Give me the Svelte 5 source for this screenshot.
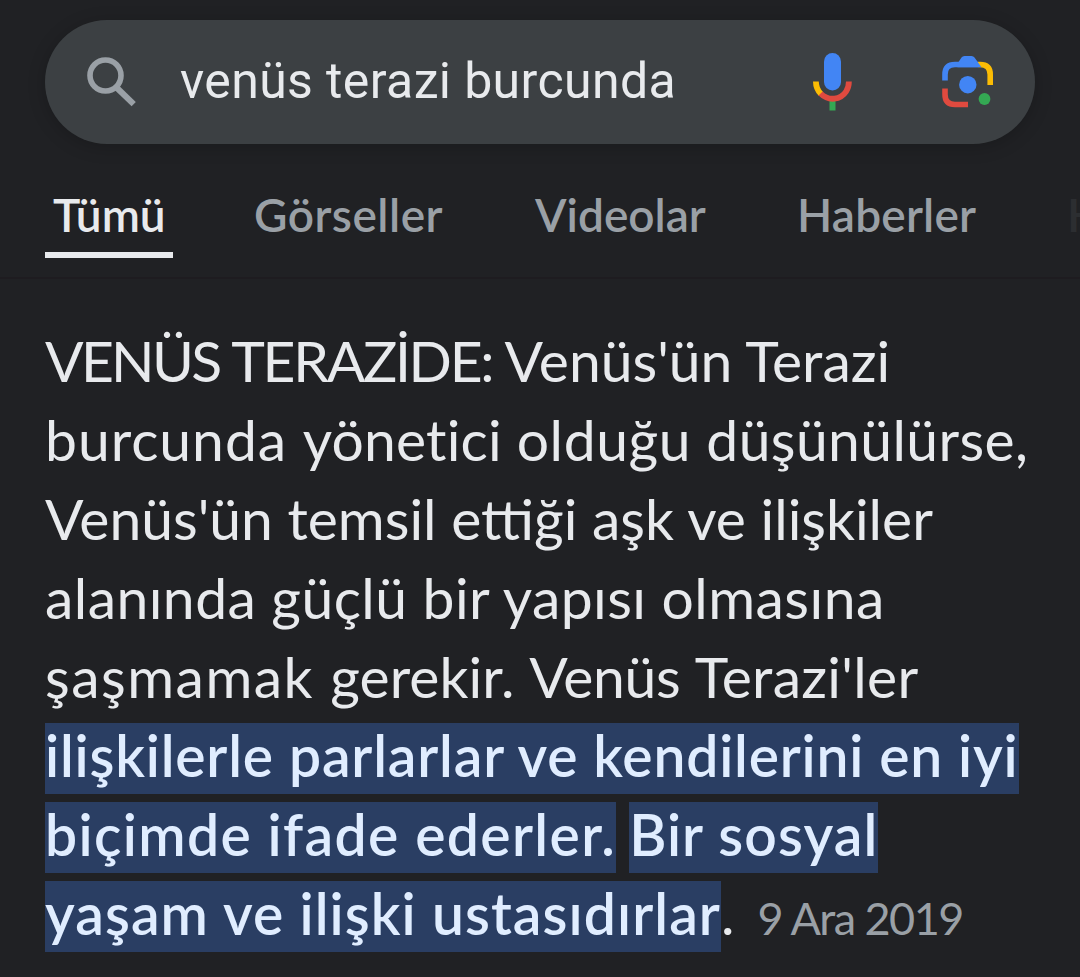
<script lang="ts">
	const tabs = [
		{ label: "Tümü", name: "all" },
		{ label: "Görseller", name: "images" },
		{ label: "Videolar", name: "videos" },
		{ label: "Haberler", name: "news" },
		{ label: "Haritalar", name: "maps" },
	];
	let active = $state("all");

	// letter spacing in px keeps every line at its measured width
	const lines = [
		[
			{ text: "VENÜS ", spacing: -2.7 },
			{ text: "TERAZİDE: ", spacing: -2.3 },
			{ text: "Venüs'ün Terazi", spacing: 0 },
		],
		[
			{ text: "burcunda ", spacing: 0.97 },
			{ text: "yönetici ", spacing: 0.2 },
			{ text: "olduğu ", spacing: 0.6 },
			{ text: "düşünülürse,", spacing: 0.4 },
		],
		[{ text: "Venüs'ün temsil ettiği aşk ve ilişkiler", spacing: 0 }],
		[{ text: "alanında güçlü bir yapısı olmasına", spacing: 0.45 }],
		[
			{ text: "şaşmamak ", spacing: 1.5 },
			{ text: "gerekir. ", spacing: 0.1 },
			{ text: "Venüs ", spacing: -0.3 },
			{ text: "Terazi'ler", spacing: 0.3 },
		],
		[{ text: "ilişkilerle parlarlar ve kendilerini en iyi", spacing: 0.81, mark: true }],
		[
			{ text: "biçimde ifade ederler.", spacing: 1.36, mark: true },
			{ text: "Bir sosyal", spacing: 1.1, mark: true },
		],
		[
			{ text: "yaşam ve ilişki ustasıdırlar", spacing: 1.07, mark: true },
			{ text: ".", spacing: 0 },
			{ text: "9 Ara 2019", spacing: -1.55, date: true },
		],
	];
</script>

<div class="page">
	<header>
		<div class="search">
			<svg class="search__icon" viewBox="0 0 50 50">
				<circle cx="18.5" cy="18.5" r="15.5" fill="none" stroke="#9aa0a6" stroke-width="5.6" />
				<path d="M30 31 L46.7 47.2" fill="none" stroke="#9aa0a6" stroke-width="6" />
			</svg>
			<span class="search__query">venüs terazi burcunda</span>
			<svg class="search__mic" viewBox="0 0 40 58">
				<rect x="11" y="0" width="17" height="37.5" rx="8.5" fill="#4285f4" />
				<path d="M16.5 47h6v10.5h-6z" fill="#34a853" />
				<path d="M2.9 28.5C2.9 34 5 38 8 41" fill="none" stroke="#fbbc04" stroke-width="5.8" />
				<path d="M7.6 40.5C15.6 48.5 27.6 47 33.1 38.5Q35.9 34 35.9 28.5" fill="none" stroke="#e04a3f" stroke-width="5.8" />
			</svg>
			<svg class="search__lens" viewBox="0 0 52 52">
				<path d="M36 8.5H38Q48.2 8.5 48.2 18.5V29" fill="none" stroke="#fbbc04" stroke-width="5.6" />
				<path d="M3 24.5V18.5Q3 8.5 13 8.5H36" fill="none" stroke="#4285f4" stroke-width="5.6" />
				<path d="M15.5 7.5L19.5 1.5Q20.5 0 22.5 0H29.5Q31.5 0 32.5 1.5L39.5 11.3H15.5Z" fill="#4285f4" />
				<path d="M3 32.5V38.5Q3 48.5 13 48.5H26" fill="none" stroke="#e04a3f" stroke-width="5.6" />
				<circle cx="25.8" cy="28.7" r="8.7" fill="#4285f4" />
				<circle cx="42.5" cy="43" r="5.9" fill="#34a853" />
			</svg>
		</div>
		<nav>
			{#each tabs as tab}
				<button class="tab tab--{tab.name}" class:active={active === tab.name} onclick={() => (active = tab.name)}>
					{tab.label}
				</button>
			{/each}
		</nav>
	</header>

	<main>
		{#each lines as line}
			<p>
				{#each line as part}
					<span class:mark={part.mark} class:date={part.date} style:letter-spacing="{part.spacing}px">{part.text}</span>
				{/each}
			</p>
		{/each}
	</main>
</div>

<style>
	:global(body) {
		margin: 0;
		background: #202124;
	}

	.page {
		width: 1080px;
		height: 977px;
		overflow: hidden;
		background: #202124;
		color: #e8eaed;
		font-family: Lato, sans-serif;
	}

	header {
		box-sizing: border-box;
		height: 279px;
		padding: 20px 45px 0;
		border-bottom: 2px solid #1e1c20;
	}

	.search {
		display: flex;
		align-items: center;
		box-sizing: border-box;
		width: 990px;
		height: 124px;
		padding-left: 42px;
		border-radius: 62px;
		background: #3c4043;
		box-shadow: 0 3px 18px rgba(0, 0, 0, 0.2);
	}

	.search__icon {
		width: 50px;
		height: 50px;
	}

	.search__query {
		width: 633px;
		margin-left: 43px;
		padding-bottom: 2px;
		font-family: Roboto, sans-serif;
		font-size: 50px;
		letter-spacing: 0.38px;
		white-space: nowrap;
	}

	.search__mic {
		width: 40px;
		height: 58px;
	}

	.search__lens {
		width: 52px;
		height: 52px;
		margin-left: 89px;
	}

	nav {
		display: flex;
		width: 1035px;
		margin-top: 34px;
		overflow: hidden;
	}

	.tab {
		box-sizing: border-box;
		flex: none;
		height: 80px;
		padding: 1px 0 2px;
		border: 0;
		border-bottom: 6px solid transparent;
		background: none;
		color: #9aa0a6;
		font: 600 46px/71px Lato, sans-serif;
		text-align: left;
		white-space: nowrap;
	}

	.tab--all {
		width: 128px;
		padding-left: 8px;
	}

	.tab--images {
		width: 190px;
		margin-left: 81px;
		letter-spacing: 0.5px;
	}

	.tab--videos {
		width: 172px;
		margin-left: 91px;
	}

	.tab--news {
		width: 182px;
		margin-left: 90px;
		letter-spacing: 0.2px;
	}

	.tab--maps {
		margin-left: 88px;
		opacity: 0.1;
	}

	.tab.active {
		border-color: #e8eaed;
		color: #e8eaed;
	}

	main {
		padding: 42px 0 0 45px;
	}

	p {
		height: 79px;
		margin: 0;
		font-size: 57px;
		line-height: 79px;
		white-space: nowrap;
	}

	.mark {
		display: inline-block;
		padding-bottom: 6px;
		background: #2a3e63;
		color: #e0edff;
		font-weight: 600;
		line-height: 65px;
	}

	.mark + .mark {
		margin-left: 13px;
	}

	.date {
		margin-left: 23px;
		color: #9aa0a6;
		font-size: 45px;
	}
</style>
